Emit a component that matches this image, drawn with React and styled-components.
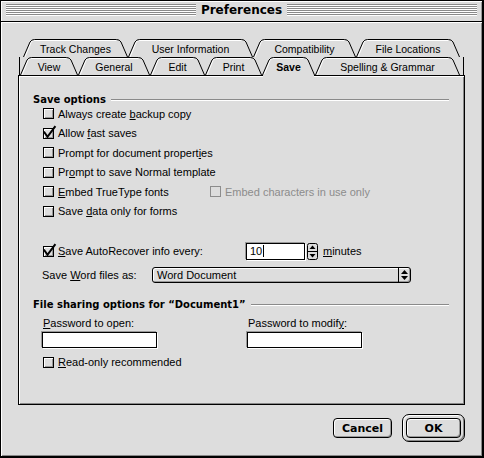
import React from "react";
import styled, { createGlobalStyle } from "styled-components";

const GlobalStyle = createGlobalStyle`
  html, body {
    margin: 0;
    padding: 0;
    background: #dddddd;
  }
  body {
    font-family: "Liberation Sans", Arial, sans-serif;
    font-size: 11px;
    color: #000;
  }
`;

const backTabs = [
	{ label: "Track Changes", w: 105 },
	{ label: "User Information", w: 125 },
	{ label: "Compatibility", w: 103 },
	{ label: "File Locations", w: 104 },
];

const frontTabs = [
	{ label: "View", w: 58 },
	{ label: "General", w: 72 },
	{ label: "Edit", w: 55 },
	{ label: "Print", w: 57 },
	{ label: "Save", w: 53, active: true },
	{ label: "Spelling & Grammar", w: 145 },
];

function tabPath(w, h) {
	const s = 9;
	return `M0.5 ${h} L${s - 2} 3 Q${s - 0.5} 0.5 ${s + 2.5} 0.5 L${w - s - 2.5} 0.5 Q${w - s + 0.5} 0.5 ${w - s + 2} 3 L${w - 0.5} ${h}`;
}

function Tab({ label, w, active }) {
	const h = 18;
	const d = tabPath(w, h);
	return (
		<TabItem $w={w} $active={active}>
			<svg width={w} height={h} viewBox={`0 0 ${w} ${h}`}>
				<path d={d + " Z"} fill="#dddddd" stroke="none" />
				<path
					d={`M2 ${h} L${8} 3.5 Q${9} 1.5 ${11.5} 1.5 L${w - 12} 1.5`}
					fill="none"
					stroke="#fff"
					strokeWidth="1"
				/>
				{active && <rect x="1" y={h - 1} width={w - 2} height="3" fill="#dddddd" />}
				<path d={d} fill="none" stroke="#000" strokeWidth="1" />
			</svg>
			<span>{label}</span>
		</TabItem>
	);
}

function Checkbox({ checked, disabled }) {
	return (
		<Box $disabled={disabled}>
			{checked && (
				<svg width="11" height="11" viewBox="0 0 11 11">
					<polyline
						points="1.5,4.5 4.5,8.8 11.8,-1"
						fill="none"
						stroke="#000"
						strokeWidth="2"
						strokeLinecap="square"
					/>
				</svg>
			)}
		</Box>
	);
}

function Check({ label, checked, disabled }) {
	return (
		<CheckItem $disabled={disabled}>
			<Checkbox checked={checked} disabled={disabled} />
			<span>{label}</span>
		</CheckItem>
	);
}

function App() {
	return (
		<>
			<GlobalStyle />
			<Window>
				<TitleBar>
					<Stripes />
					<Title>Preferences</Title>
					<Stripes />
				</TitleBar>
				<Body>
					<BackRow>
						{backTabs.map((t) => (
							<Tab key={t.label} {...t} />
						))}
					</BackRow>
					<FrontRow>
						{frontTabs.map((t) => (
							<Tab key={t.label} {...t} />
						))}
					</FrontRow>
					<Panel>
						<Head>
							<HeadText>Save options</HeadText>
							<Rule />
						</Head>
						<Rows>
							<Row>
								<Check label={<>Always create <u>b</u>ackup copy</>} />
							</Row>
							<Row>
								<Check checked label={<>Allow <u>f</u>ast saves</>} />
							</Row>
							<Row>
								<Check label={<>Prompt for document propert<u>i</u>es</>} />
							</Row>
							<Row>
								<Check label={<>Pr<u>o</u>mpt to save Normal template</>} />
							</Row>
							<Row>
								<Cell $w={167}>
									<Check label={<><u>E</u>mbed TrueType fonts</>} />
								</Cell>
								<Check disabled label="Embed characters in use only" />
							</Row>
							<Row>
								<Check label={<>Save <u>d</u>ata only for forms</>} />
							</Row>
						</Rows>

						<AutoRow>
							<Checkbox checked />
							<FieldLabel $w={188}>
								<u>S</u>ave AutoRecover info every:
							</FieldLabel>
							<NumberField>
								10<Caret />
							</NumberField>
							<Stepper>
								<svg width="11" height="17" viewBox="0 0 11 17">
									<rect x="0.5" y="0.5" width="10" height="16" rx="2" fill="#dddddd" stroke="#000" />
									<line x1="1" y1="8.5" x2="10" y2="8.5" stroke="#000" />
									<path d="M5.5 2.5 L8.5 6 L2.5 6 Z" fill="#000" />
									<path d="M2.5 11 L8.5 11 L5.5 14.5 Z" fill="#000" />
								</svg>
							</Stepper>
							<Units>
								<u>m</u>inutes
							</Units>
						</AutoRow>

						<PopupRow>
							<FieldLabel $w={110}>
								Save <u>W</u>ord files as:
							</FieldLabel>
							<Popup>
								<PopupText>Word Document</PopupText>
								<PopupArrow>
									<svg width="7" height="10" viewBox="0 0 7 10">
										<path d="M3.5 0 L7 4 L0 4 Z" fill="#000" />
										<path d="M0 6 L7 6 L3.5 10 Z" fill="#000" />
									</svg>
								</PopupArrow>
							</Popup>
						</PopupRow>

						<Head $top={14}>
							<HeadText>File sharing options for “Document1”</HeadText>
							<Rule />
						</Head>
						<PasswordGrid>
							<div>
								<SmallLabel>
									<u>P</u>assword to open:
								</SmallLabel>
								<TextField />
							</div>
							<div>
								<SmallLabel>
									Password to modif<u>y</u>:
								</SmallLabel>
								<TextField />
							</div>
						</PasswordGrid>
						<ReadOnlyRow>
							<Check label={<><u>R</u>ead-only recommended</>} />
						</ReadOnlyRow>
					</Panel>
					<Buttons>
						<Button $w={59}>Cancel</Button>
						<DefaultRing>
							<Button $w={55}>OK</Button>
						</DefaultRing>
					</Buttons>
				</Body>
			</Window>
		</>
	);
}

const Window = styled.div`
	width: 484px;
	height: 458px;
	box-sizing: border-box;
	border: 1px solid #000;
	border-right-width: 2px;
	border-bottom-width: 2px;
	background: #dddddd;
	display: flex;
	flex-direction: column;
`;

const TitleBar = styled.div`
	height: 21px;
	flex: none;
	box-sizing: border-box;
	border-bottom: 1px solid #000;
	display: flex;
	align-items: flex-start;
	gap: 4px;
	padding: 3px 5px 0 5px;
	box-shadow: inset 1px 1px 0 #fff, inset -1px 0 0 #999;
`;

const Stripes = styled.div`
	flex: 1;
	height: 12px;
	background: repeating-linear-gradient(to bottom, #8a8a8a 0 1px, #ffffff 1px 2px);
`;

const Title = styled.div`
	font-family: "DejaVu Sans", sans-serif;
	font-weight: bold;
	font-size: 12px;
	line-height: 13px;
	padding: 0 1px;
`;

const Body = styled.div`
	flex: 1;
	padding: 17px 17px 0 17px;
	box-shadow: inset 1px 1px 0 #fff, inset -1px -1px 0 #888;
`;

const BackRow = styled.div`
	display: flex;
	margin-left: 5px;
	height: 18px;
`;

const FrontRow = styled.div`
	display: flex;
	margin-left: 1px;
	width: 445px;
	box-sizing: border-box;
	height: 18px;
	border-left: 1px solid #000;
	border-right: 1px solid #000;
`;

const TabItem = styled.div`
	position: relative;
	z-index: ${(p) => (p.$active ? 2 : 1)};
	flex: none;
	width: ${(p) => p.$w}px;
	height: 18px;
	display: flex;
	align-items: center;
	justify-content: center;
	padding-top: 1px;
	box-sizing: border-box;
	font-size: 10.5px;
	font-weight: ${(p) => (p.$active ? "bold" : "normal")};
	svg {
		position: absolute;
		left: 0;
		top: 0;
		overflow: visible;
	}
	span {
		position: relative;
		white-space: nowrap;
	}
`;

const Panel = styled.div`
	width: 447px;
	height: 330px;
	box-sizing: border-box;
	border: 1px solid #000;
	box-shadow: inset 1px 1px 0 #fff, inset -1px -1px 0 #888;
	padding: 17px 14px 0 14px;
`;

const Head = styled.div`
	display: flex;
	align-items: flex-start;
	height: 11px;
	margin-top: ${(p) => p.$top || 0}px;
`;

const HeadText = styled.span`
	font-family: "DejaVu Sans", sans-serif;
	font-weight: bold;
	font-size: 10px;
	line-height: 14px;
	white-space: nowrap;
`;

const Rule = styled.div`
	flex: 1;
	margin: 6px 1px 0 5px;
	border-top: 1px solid #8a8a8a;
	border-bottom: 1px solid #fff;
`;

const Rows = styled.div`
	display: flex;
	flex-direction: column;
`;

const Row = styled.div`
	height: 19.5px;
	display: flex;
	align-items: center;
	padding-left: 10px;
`;

const Cell = styled.div`
	width: ${(p) => p.$w}px;
	display: flex;
`;

const CheckItem = styled.label`
	display: flex;
	align-items: center;
	gap: 4px;
	line-height: 14px;
	white-space: nowrap;
	color: ${(p) => (p.$disabled ? "#8c8c8c" : "#000")};
`;

const Box = styled.span`
	position: relative;
	flex: none;
	width: 11px;
	height: 11px;
	box-sizing: border-box;
	border: 1px solid ${(p) => (p.$disabled ? "#8c8c8c" : "#000")};
	background: #dddddd;
	box-shadow: ${(p) => (p.$disabled ? "none" : "inset 1px 1px 0 #fff, inset -1px -1px 0 #999")};
	svg {
		position: absolute;
		left: -1px;
		top: -1px;
		overflow: visible;
	}
`;

const AutoRow = styled.div`
	height: 20px;
	margin-top: 20px;
	display: flex;
	align-items: center;
	padding-left: 10px;
	gap: 0;
	& > span:first-child {
		margin-right: 4px;
	}
`;

const FieldLabel = styled.span`
	width: ${(p) => p.$w}px;
	flex: none;
	line-height: 14px;
	white-space: nowrap;
`;

const NumberField = styled.div`
	width: 59px;
	height: 17px;
	box-sizing: border-box;
	border: 1px solid #000;
	background: #fff;
	display: flex;
	align-items: center;
	padding-left: 3px;
	font-size: 11px;
	box-shadow: -1px -1px 0 #999, 1px 1px 0 #fff;
`;

const Caret = styled.span`
	width: 1px;
	height: 12px;
	background: #000;
	margin-left: 1px;
`;

const Stepper = styled.div`
	margin-left: 2px;
	width: 11px;
	height: 17px;
	display: flex;
`;

const Units = styled.span`
	margin-left: 5px;
	line-height: 14px;
`;

const PopupRow = styled.div`
	height: 18px;
	margin-top: 5px;
	display: flex;
	align-items: center;
	padding-left: 9px;
`;

const Popup = styled.div`
	width: 259px;
	height: 16px;
	box-sizing: border-box;
	border: 1px solid #000;
	border-radius: 3px;
	background: #dddddd;
	box-shadow: inset 1px 1px 0 #fff, inset -1px -1px 0 #999;
	display: flex;
	align-items: stretch;
`;

const PopupText = styled.span`
	flex: 1;
	padding-left: 4px;
	line-height: 14px;
`;

const PopupArrow = styled.span`
	width: 11px;
	border-left: 1px solid #000;
	display: flex;
	align-items: center;
	justify-content: center;
`;

const PasswordGrid = styled.div`
	display: grid;
	grid-template-columns: 205px 1fr;
	margin-top: 7px;
	padding-left: 9px;
`;

const SmallLabel = styled.div`
	line-height: 14px;
	padding-left: 1px;
	white-space: nowrap;
`;

const TextField = styled.div`
	margin-top: 2px;
	width: 115px;
	height: 16px;
	box-sizing: border-box;
	border: 1px solid #000;
	background: #fff;
	box-shadow: -1px -1px 0 #999, 1px 1px 0 #fff;
`;

const ReadOnlyRow = styled.div`
	height: 20px;
	margin-top: 4px;
	display: flex;
	align-items: center;
	padding-left: 10px;
`;

const Buttons = styled.div`
	margin-top: 9px;
	height: 28px;
	display: flex;
	align-items: center;
	justify-content: flex-end;
	gap: 10px;
`;

const Button = styled.div`
	width: ${(p) => p.$w}px;
	height: 20px;
	box-sizing: border-box;
	border: 1px solid #000;
	border-radius: 4px;
	background: #dddddd;
	box-shadow: inset 1px 1px 0 #fff, inset -1px -1px 0 #999;
	display: flex;
	align-items: center;
	justify-content: center;
	font-family: "DejaVu Sans", sans-serif;
	font-weight: bold;
	font-size: 11px;
`;

const DefaultRing = styled.div`
	padding: 3px;
	border: 1px solid #000;
	border-radius: 7px;
	background: #dddddd;
	box-shadow: inset 1px 1px 0 #fff, inset -1px -1px 0 #888;
`;

export default App;
